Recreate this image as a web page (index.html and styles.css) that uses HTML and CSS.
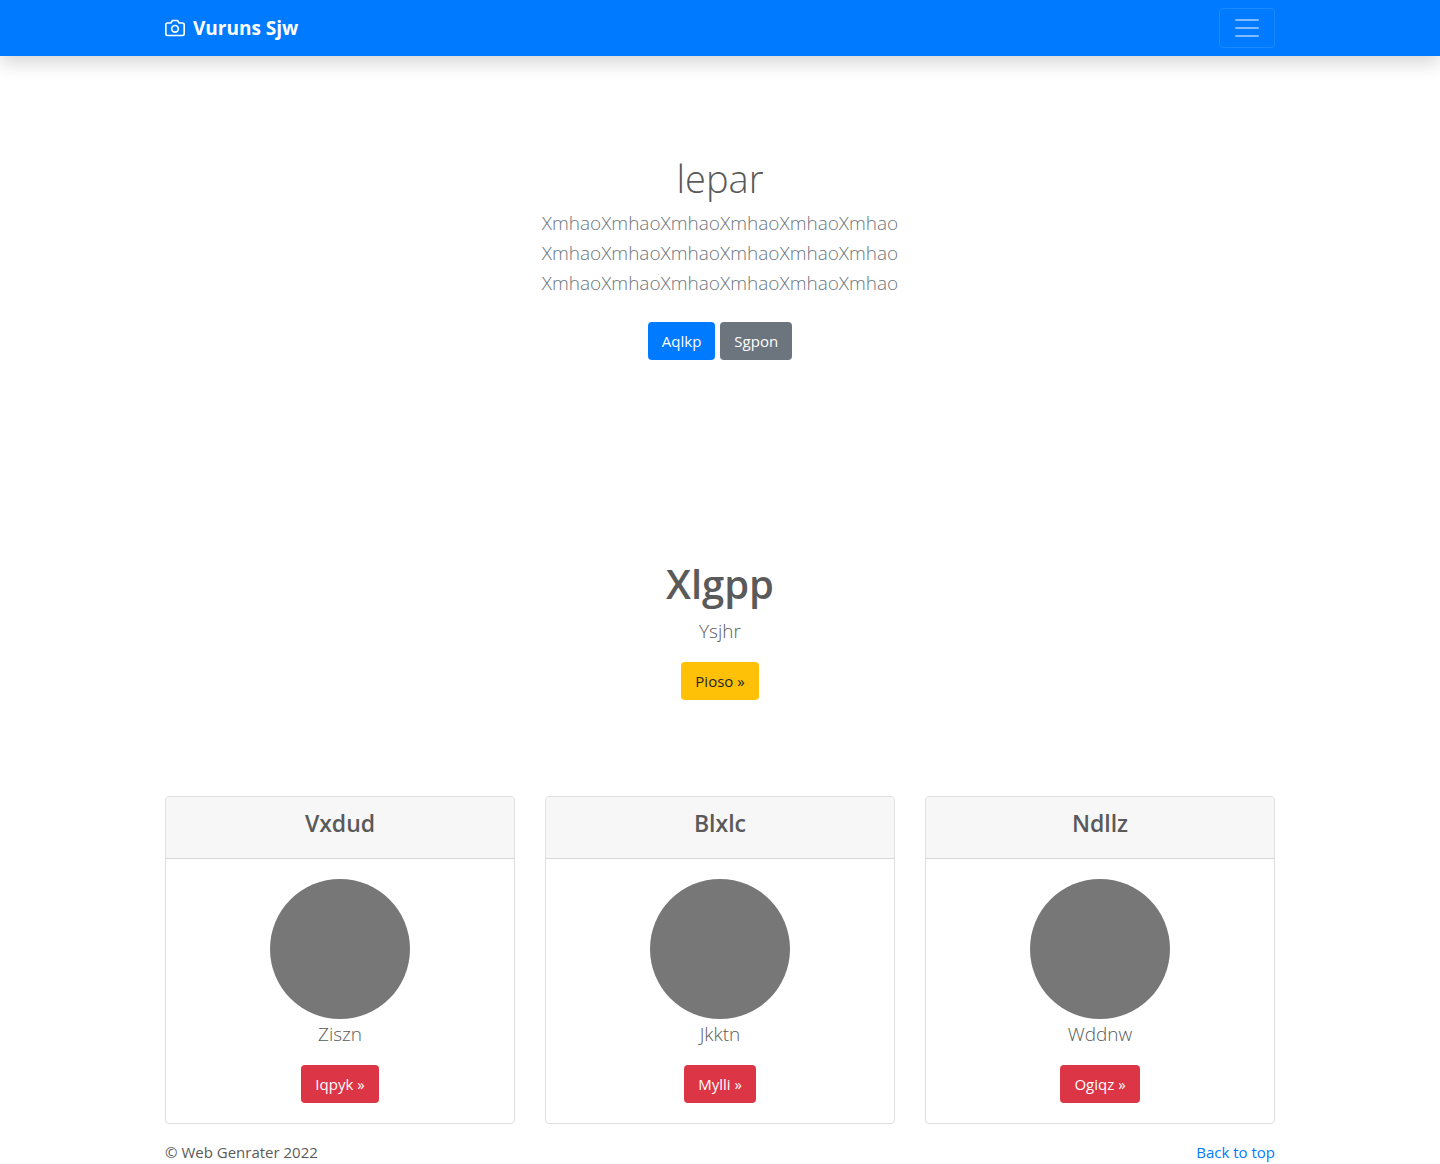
FILE: index.html
```html
<!DOCTYPE html>
<html lang="en">
<head>
<meta charset="utf-8">
<meta name="viewport" content="width=device-width, initial-scale=1">
<title>Vuruns Sjw</title>
<link rel="stylesheet" href="styles.css">
</head>
<body id="top">
<header class="navbar">
  <div class="container navbar-inner">
    <a class="brand" href="#">
      <svg class="brand-icon" width="20" height="20" viewBox="0 0 24 24" fill="none" stroke="currentColor" stroke-width="2" stroke-linecap="round" stroke-linejoin="round" aria-hidden="true"><path d="M23 19a2 2 0 0 1-2 2H3a2 2 0 0 1-2-2V8a2 2 0 0 1 2-2h4l2-3h6l2 3h4a2 2 0 0 1 2 2z"/><circle cx="12" cy="13" r="4"/></svg>
      <strong>Vuruns Sjw</strong>
    </a>
    <button class="toggler" type="button" aria-label="Toggle navigation">
      <svg width="30" height="30" viewBox="0 0 30 30" stroke="currentColor" stroke-width="2" stroke-linecap="round" stroke-miterlimit="10" aria-hidden="true"><path d="M4 7h22M4 15h22M4 23h22"/></svg>
    </button>
  </div>
</header>
<main>
  <section class="hero">
    <h1 class="hero-title">lepar</h1>
    <p class="lead">XmhaoXmhaoXmhaoXmhaoXmhaoXmhao<br>XmhaoXmhaoXmhaoXmhaoXmhaoXmhao<br>XmhaoXmhaoXmhaoXmhaoXmhaoXmhao</p>
    <div class="actions">
      <button class="btn btn-primary" type="button">Aqlkp</button>
      <button class="btn btn-secondary" type="button">Sgpon</button>
    </div>
  </section>
  <section class="intro">
    <h2 class="intro-title">Xlgpp</h2>
    <p class="lead">Ysjhr</p>
    <button class="btn btn-warning" type="button">Pioso »</button>
  </section>
  <section class="container cards">
    <article class="card">
      <h3 class="card-header">Vxdud</h3>
      <div class="card-body">
        <div class="avatar"></div>
        <p class="lead">Ziszn</p>
        <button class="btn btn-danger" type="button">Iqpyk »</button>
      </div>
    </article>
    <article class="card">
      <h3 class="card-header">Blxlc</h3>
      <div class="card-body">
        <div class="avatar"></div>
        <p class="lead">Jkktn</p>
        <button class="btn btn-danger" type="button">Mylli »</button>
      </div>
    </article>
    <article class="card">
      <h3 class="card-header">Ndllz</h3>
      <div class="card-body">
        <div class="avatar"></div>
        <p class="lead">Wddnw</p>
        <button class="btn btn-danger" type="button">Ogiqz »</button>
      </div>
    </article>
  </section>
</main>
<footer class="container footer">
  <p>© Web Genrater 2022</p>
  <a href="#top">Back to top</a>
</footer>
</body>
</html>
```
FILE: styles.css
```css
* {
  box-sizing: border-box;
}

body {
  margin: 0;
  background: #fff;
  color: #5a5a5a;
  font-family: "Segoe UI", "Open Sans", "Noto Sans", sans-serif;
  font-size: 15px;
  line-height: 24px;
}

h1, h2, h3, p {
  margin: 0;
}

.container {
  width: 100%;
  max-width: 1140px;
  margin: 0 auto;
  padding: 0 15px;
}

.navbar {
  background: #007bff;
  padding: 8px 0;
  box-shadow: 0 8px 16px rgba(0, 0, 0, 0.15);
}

.navbar-inner {
  display: flex;
  align-items: center;
  justify-content: space-between;
}

.brand {
  display: flex;
  align-items: center;
  gap: 8px;
  color: #fff;
  font-size: 19px;
  line-height: 30px;
  text-decoration: none;
}

.toggler {
  display: flex;
  padding: 4px 12px;
  border: 1px solid rgba(255, 255, 255, 0.1);
  border-radius: 4px;
  background: transparent;
  color: rgba(255, 255, 255, 0.5);
}

.hero {
  padding: 96px 16px;
  text-align: center;
}

.hero-title {
  margin-bottom: 6px;
  padding-top: 2px;
  font-size: 38px;
  font-weight: 300;
  line-height: 48px;
}

.lead {
  margin-bottom: 16px;
  font-size: 19px;
  font-weight: 300;
  line-height: 30px;
}

.hero .lead {
  color: #6c757d;
}

.actions {
  display: flex;
  justify-content: center;
  gap: 5px;
  padding: 8px 0;
}

.btn {
  padding: 6px 13px;
  border: 1px solid transparent;
  border-radius: 4px;
  color: #fff;
  font-family: inherit;
  font-size: 15px;
  line-height: 24px;
}

.btn-primary {
  background: #007bff;
}

.btn-secondary {
  background: #6c757d;
}

.btn-warning {
  background: #ffc107;
  color: #212529;
}

.btn-danger {
  background: #dc3545;
}

.intro {
  padding: 96px 16px;
  text-align: center;
}

.intro-title {
  margin-bottom: 8px;
  font-size: 40px;
  font-weight: 600;
  line-height: 48px;
}

.cards {
  display: grid;
  grid-template-columns: repeat(3, 1fr);
  gap: 30px;
}

.card {
  border: 1px solid #dfdfdf;
  border-radius: 4px;
  text-align: center;
}

.card-header {
  padding: 12px 20px 20px;
  border-bottom: 1px solid #d8d8d8;
  border-radius: 3px 3px 0 0;
  background: #f7f7f7;
  font-size: 23px;
  font-weight: 600;
  line-height: 29px;
}

.card-body {
  padding: 20px;
}

.avatar {
  width: 140px;
  height: 140px;
  margin: 0 auto;
  border-radius: 50%;
  background: #777;
}

.footer {
  display: flex;
  justify-content: space-between;
  padding-top: 16px;
  padding-bottom: 0;
}

.footer a {
  color: #007bff;
  text-decoration: none;
}
```
